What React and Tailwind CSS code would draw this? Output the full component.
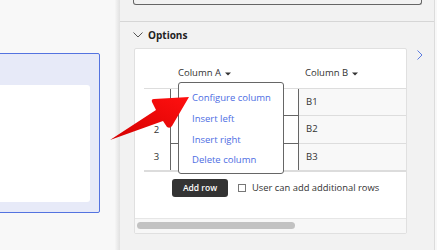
import React from 'react';

const rows = [
  { n: '1', b: 'B1', h: 'h-[27px]' },
  { n: '2', b: 'B2', h: 'h-[28px]' },
  { n: '3', b: 'B3', h: 'h-[26px]' },
];

const menuItems = ['Configure column', 'Insert left', 'Insert right', 'Delete column'];

const Caret = () => (
  <svg width="6" height="4" viewBox="0 0 6 4" className="ml-[4px] mt-[1px]">
    <path d="M0 0.5 L6 0.5 L3 3.5 Z" fill="#333" />
  </svg>
);

export default function App() {
  return (
    <div className="relative flex h-[250px] w-[437px] overflow-hidden bg-[#f8f8f8] font-['Open_Sans',sans-serif] text-[#333]">
      {/* canvas side */}
      <div className="w-[115px] shrink-0">
        <div className="ml-[-20px] mt-[53px] h-[160px] w-[120px] rounded-[2px] border border-[#5473e0] bg-[#e7eaf8] pt-[31px]">
          <div className="h-[117px] w-[109px] rounded-[3px] bg-white" />
        </div>
      </div>
      <div className="w-[5px] shrink-0 bg-linear-to-r from-[#f6f6f6] to-[#e1e1e1]" />

      {/* properties panel */}
      <div className="w-[315px] shrink-0 border-r border-[#dcdcdc] bg-[#f2f2f2]">
        <div className="h-[22px] border-b border-[#d6d6d6]">
          <div className="ml-[13px] h-[5px] w-[289px] rounded-b-[3px] border-x border-b border-[#666]" />
        </div>

        <div className="flex h-[26px] items-center pl-[13px]">
          <svg width="10" height="6" viewBox="0 0 10 6">
            <path d="M0.5 0.5 L5 5 L9.5 0.5" fill="none" stroke="#555" strokeWidth="1" />
          </svg>
          <span className="ml-[5px] text-[10px] font-bold text-[#222]">Options</span>
        </div>

        <div className="flex">
          <div className="relative ml-[14px] flex h-[186px] w-[273px] flex-col overflow-hidden rounded-[2px] border border-[#e0e0e0] bg-white">
            {/* table */}
            <div className="ml-[9px] w-[360px] text-[9.5px]">
              <div className="flex h-[40px] items-end border-b border-[#dddddd] pb-[8px]">
                <div className="w-[27px]" />
                <div className="flex w-[128px] items-center pl-[7px] leading-[14px]">
                  Column A
                  <Caret />
                </div>
                <div className="flex items-center pl-[6px] leading-[14px]">
                  Column B
                  <Caret />
                </div>
              </div>
              {rows.map((r, i) => (
                <div key={r.n} className={`flex ${r.h}`}>
                  <div className="flex w-[27px] items-center justify-center border-r border-[#666] pr-[1px] pt-[1px]">{r.n}</div>
                  <div className={`w-[128px] border-r border-[#666] ${i < 2 ? 'border-b' : ''}`} />
                  <div className={`flex flex-1 items-center bg-[#f8f8f8] pl-[7px] ${i < 2 ? 'border-b border-[#dddddd]' : ''}`}>
                    {r.b}
                  </div>
                </div>
              ))}
              <div className="h-[2px] bg-[#dcdcdc]" />
            </div>

            {/* footer */}
            <div className="mt-[7px] flex items-center pl-[37px]">
              <button className="h-[18px] w-[56px] rounded-[3px] bg-[#333] text-[8.5px] font-semibold text-white">Add row</button>
              <span className="ml-[10px] h-[8px] w-[8px] border border-[#777] bg-white" />
              <span className="ml-[6px] text-[9.4px] text-[#333]">User can add additional rows</span>
            </div>

            {/* horizontal scrollbar */}
            <div className="mt-auto h-[15px] border-t border-[#e6e6e6] bg-[#f7f7f7] pl-[2px] pt-[3px]">
              <div className="h-[7px] w-[158px] rounded-full bg-[#c2c2c2]" />
            </div>

            {/* column menu */}
            <div className="absolute left-[43px] top-[33px] h-[92px] w-[106px] rounded-[3px] border border-[#666] bg-white pl-[13px] pt-[5px] text-[9.5px] leading-[20.8px] text-[#4d6de3]">
              {menuItems.map((m) => (
                <div key={m}>{m}</div>
              ))}
            </div>
          </div>
          <svg width="6" height="10" viewBox="0 0 6 10" className="ml-[10px] mt-[2px]">
            <path d="M0.5 0.5 L5 5 L0.5 9.5" fill="none" stroke="#5b7be0" strokeWidth="1" />
          </svg>
        </div>
      </div>

      {/* annotation arrow */}
      <svg width="437" height="250" className="pointer-events-none absolute left-0 top-0">
        <defs>
          <linearGradient id="arrowRed" x1="0" y1="1" x2="1" y2="0">
            <stop offset="0" stopColor="#d40000" />
            <stop offset="1" stopColor="#ff1010" />
          </linearGradient>
        </defs>
        <path
          d="M110 140 L156 110 L152 102 Q151 99 154 99 L189 97 L172 126 Q170 129 167 127 L163 121 Z"
          fill="url(#arrowRed)"
        />
      </svg>
    </div>
  );
}
